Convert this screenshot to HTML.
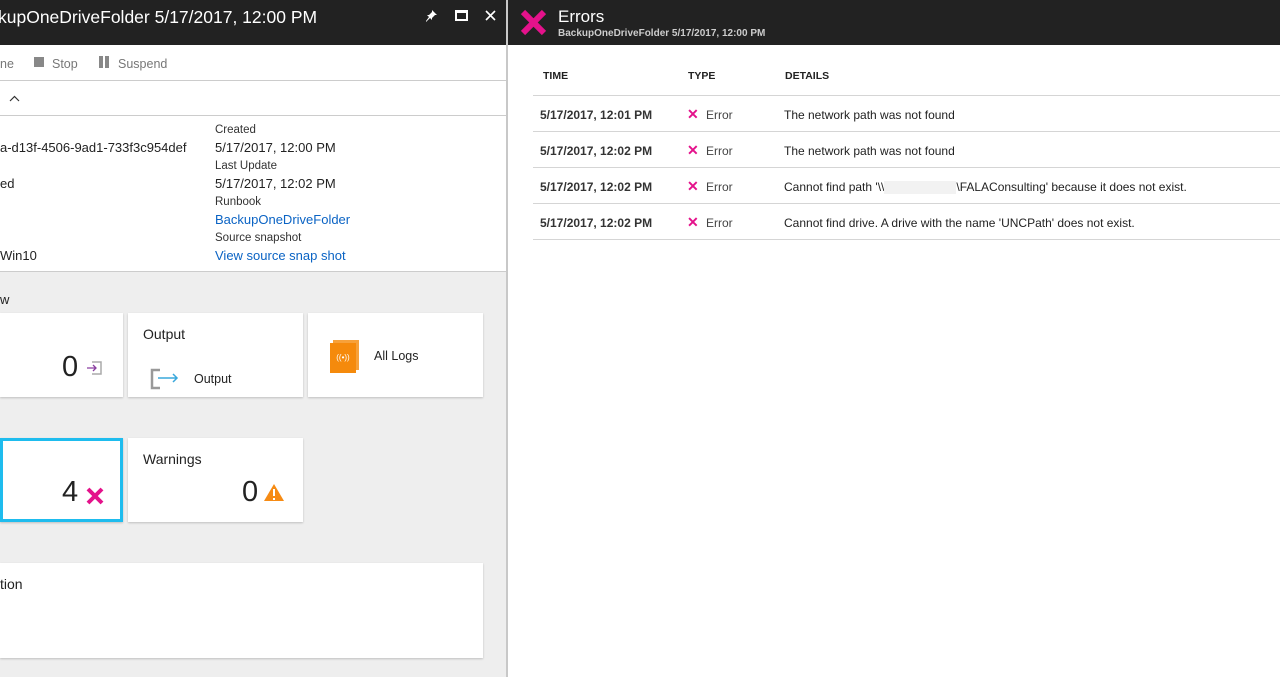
<!DOCTYPE html>
<html><head><meta charset="utf-8"><style>
*{margin:0;padding:0;box-sizing:border-box}
body{width:1280px;height:677px;overflow:hidden;font-family:"Liberation Sans",sans-serif;background:#fff;position:relative;color:#222}
.a{position:absolute;white-space:nowrap}
.hdr{background:#222;height:45px;top:0}
.tile{position:absolute;background:#fff;box-shadow:0 1px 2px rgba(0,0,0,.2)}
.lbl{font-size:11.5px;color:#333}
.val{font-size:13px;color:#222}
.link{font-size:13px;color:#0a63c4}
.th{font-size:10.5px;font-weight:bold;color:#222}
.td{font-size:12px;color:#222}
.line{position:absolute;left:533px;right:0;height:1px;background:#d5d5d5}
.x{color:#e4128b;font-weight:bold}
</style></head><body>
<div class="a hdr" style="left:0;width:506px"></div>
<div class="a" style="left:-2px;top:7px;font-size:17.5px;color:#fff">kupOneDriveFolder 5/17/2017, 12:00 PM</div>
<svg class="a" style="left:423px;top:8px" width="16" height="16" viewBox="0 0 16 16"><path d="M9 2l5 5-2 0-3 3 0 2-2-2-4 4 0-1 3-4-2-2 2 0 3-3z" fill="#fff"/></svg>
<div class="a" style="left:455px;top:10px;width:13px;height:11px;border:2px solid #fff;border-top-width:3px"></div>
<svg class="a" style="left:485px;top:10px" width="11" height="11"><path d="M1 1L10 10M10 1L1 10" stroke="#fff" stroke-width="1.6"/></svg>
<div class="a" style="left:0;top:57px;font-size:12.5px;color:#777">ne</div>
<div class="a" style="left:34px;top:57px;width:10px;height:10px;background:#888"></div>
<div class="a" style="left:52px;top:57px;font-size:12.5px;color:#777">Stop</div>
<div class="a" style="left:99px;top:56px;width:4px;height:12px;background:#888"></div>
<div class="a" style="left:105px;top:56px;width:4px;height:12px;background:#888"></div>
<div class="a" style="left:118px;top:57px;font-size:12.5px;color:#777">Suspend</div>
<div class="a" style="left:0;top:80px;width:506px;height:1px;background:#ccc"></div>
<svg class="a" style="left:9px;top:95px" width="11" height="7"><path d="M1 6L5.5 1.5 10 6" stroke="#333" fill="none" stroke-width="1.2"/></svg>
<div class="a" style="left:0;top:115px;width:506px;height:1px;background:#ccc"></div>
<div class="a val" style="left:0;top:140px">a-d13f-4506-9ad1-733f3c954def</div>
<div class="a val" style="left:0;top:176px">ed</div>
<div class="a val" style="left:0;top:248px">Win10</div>
<div class="a lbl" style="left:215px;top:124px">Created</div>
<div class="a val" style="left:215px;top:140px">5/17/2017, 12:00 PM</div>
<div class="a lbl" style="left:215px;top:160px">Last Update</div>
<div class="a val" style="left:215px;top:176px">5/17/2017, 12:02 PM</div>
<div class="a lbl" style="left:215px;top:196px">Runbook</div>
<div class="a link" style="left:215px;top:212px">BackupOneDriveFolder</div>
<div class="a lbl" style="left:215px;top:232px">Source snapshot</div>
<div class="a link" style="left:215px;top:248px">View source snap shot</div>
<div class="a" style="left:0;top:271px;width:506px;height:406px;background:#eee;border-top:1px solid #ccc"></div>
<div class="a" style="left:0;top:292px;font-size:13px">w</div>
<div class="tile" style="left:0;top:313px;width:123px;height:84px"><div class="a" style="left:62px;top:38px;font-size:29px">0</div>
<svg class="a" style="left:86px;top:48px" width="16" height="14"><path d="M6 1h9v12h-9" stroke="#aaa" fill="none" stroke-width="1.5"/><path d="M1 7h9M7 4l3 3-3 3" stroke="#8a3fa0" fill="none" stroke-width="1.3"/></svg></div>
<div class="tile" style="left:128px;top:313px;width:175px;height:84px"><div class="a" style="left:15px;top:13px;font-size:14px">Output</div>
<svg class="a" style="left:22px;top:55px" width="30" height="22"><path d="M10 2H2v18h8" stroke="#999" fill="none" stroke-width="2.5"/><path d="M8 10h19M23 6l4 4-4 4" stroke="#3aa8dc" fill="none" stroke-width="1.5"/></svg>
<div class="a" style="left:66px;top:59px;font-size:12.5px">Output</div></div>
<div class="tile" style="left:308px;top:313px;width:175px;height:84px">
<div class="a" style="left:25px;top:27px;width:26px;height:30px;background:#f7a13a"></div>
<div class="a" style="left:22px;top:30px;width:26px;height:30px;background:#f58a0c;color:#fff;font-size:8px;text-align:center;line-height:30px">((•))</div>
<div class="a" style="left:66px;top:36px;font-size:12.5px">All Logs</div></div>
<div class="tile" style="left:0;top:438px;width:123px;height:84px;border:3px solid #1ebcee"><div class="a" style="left:59px;top:35px;font-size:29px">4</div>
<svg class="a" style="left:82px;top:45px" width="20" height="20"><path d="M3 3L17 17M17 3L3 17" stroke="#e4128b" stroke-width="4"/></svg></div>
<div class="tile" style="left:128px;top:438px;width:175px;height:84px"><div class="a" style="left:15px;top:13px;font-size:14px">Warnings</div><div class="a" style="left:114px;top:38px;font-size:29px">0</div>
<svg class="a" style="left:135px;top:45px" width="22" height="19"><path d="M11 1L21 18H1z" fill="#f68b14"/><path d="M11 6v7M11 15v2" stroke="#fff" stroke-width="2"/></svg></div>
<div class="tile" style="left:0;top:563px;width:483px;height:95px"><div class="a" style="left:0;top:13px;font-size:14px">tion</div></div>
<div class="a" style="left:506px;top:0;width:2px;height:677px;background:#c8c8c8"></div>
<div class="a hdr" style="left:508px;width:772px"></div>
<svg class="a" style="left:520px;top:9px" width="27" height="27"><path d="M3 3L24 24M24 3L3 24" stroke="#e4128b" stroke-width="6"/></svg>
<div class="a" style="left:558px;top:7px;font-size:17px;color:#fff">Errors</div>
<div class="a" style="left:558px;top:28px;font-size:10px;color:#ccc;font-weight:bold">BackupOneDriveFolder 5/17/2017, 12:00 PM</div>
<div class="a th" style="left:543px;top:70px">TIME</div>
<div class="a th" style="left:688px;top:70px">TYPE</div>
<div class="a th" style="left:785px;top:70px">DETAILS</div>
<div class="line" style="top:95px"></div><div class="line" style="top:131px"></div><div class="line" style="top:167px"></div><div class="line" style="top:203px"></div><div class="line" style="top:239px"></div>
<div class="a td" style="left:540px;top:108px;font-weight:bold;color:#333">5/17/2017, 12:01 PM</div>
<div class="a td" style="left:540px;top:144px;font-weight:bold;color:#333">5/17/2017, 12:02 PM</div>
<div class="a td" style="left:540px;top:180px;font-weight:bold;color:#333">5/17/2017, 12:02 PM</div>
<div class="a td" style="left:540px;top:216px;font-weight:bold;color:#333">5/17/2017, 12:02 PM</div>
<div class="a td x" style="left:687px;top:106px;font-size:14px">✕</div><div class="a td" style="left:706px;top:108px;color:#444">Error</div>
<div class="a td x" style="left:687px;top:142px;font-size:14px">✕</div><div class="a td" style="left:706px;top:144px;color:#444">Error</div>
<div class="a td x" style="left:687px;top:178px;font-size:14px">✕</div><div class="a td" style="left:706px;top:180px;color:#444">Error</div>
<div class="a td x" style="left:687px;top:214px;font-size:14px">✕</div><div class="a td" style="left:706px;top:216px;color:#444">Error</div>
<div class="a td" style="left:784px;top:108px">The network path was not found</div>
<div class="a td" style="left:784px;top:144px">The network path was not found</div>
<div class="a td" style="left:784px;top:180px">Cannot find path '\\<span style="display:inline-block;width:72px;height:13px;background:#f2f2f2;vertical-align:middle"></span>\FALAConsulting' because it does not exist.</div>
<div class="a td" style="left:784px;top:216px">Cannot find drive. A drive with the name 'UNCPath' does not exist.</div>
</body></html>
